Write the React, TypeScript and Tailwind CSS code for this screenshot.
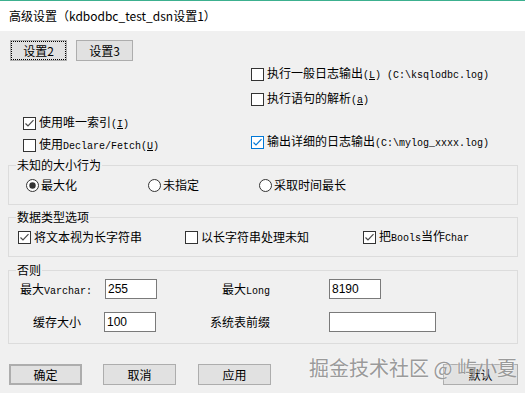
import React from "react";

const CJK = { fontFamily: '"Noto Sans CJK SC", "Noto Sans", sans-serif' };

function Mono({ children }: { children: React.ReactNode }) {
  return (
    <span className="text-[10px]" style={{ fontFamily: '"Liberation Mono", monospace' }}>
      {children}
    </span>
  );
}

function Check({ checked, blue }: { checked?: boolean; blue?: boolean }) {
  const c = blue ? "#0078d7" : "#333333";
  return (
    <svg width="13" height="13" viewBox="0 0 13 13" className="shrink-0">
      <rect x="0.5" y="0.5" width="12" height="12" fill="#fff" stroke={c} />
      {checked && (
        <polyline
          points="2.5,6.5 5,9 10.5,3.2"
          fill="none"
          stroke={blue ? "#0078d7" : "#4a4a4a"}
          strokeWidth="1.2"
        />
      )}
    </svg>
  );
}

function Radio({ checked }: { checked?: boolean }) {
  return (
    <svg width="13" height="13" viewBox="0 0 13 13" className="shrink-0">
      <circle cx="6.5" cy="6.5" r="6" fill="#fff" stroke="#333" />
      {checked && <circle cx="6.5" cy="6.5" r="3.2" fill="#333" />}
    </svg>
  );
}

function CB({
  checked,
  blue,
  children,
  className = "",
}: {
  checked?: boolean;
  blue?: boolean;
  children: React.ReactNode;
  className?: string;
}) {
  return (
    <div className={`flex h-[16px] items-center gap-[3px] whitespace-nowrap ${className}`}>
      <Check checked={checked} blue={blue} />
      <span className="leading-[16px]">{children}</span>
    </div>
  );
}

function Btn({
  children,
  className = "",
}: {
  children: React.ReactNode;
  className?: string;
}) {
  return (
    <div
      className={`flex h-[21px] items-center justify-center border border-[#adadad] bg-[#e1e1e1] text-[12px] leading-none ${className}`}
    >
      {children}
    </div>
  );
}

function Input({ value, w }: { value?: string; w: string }) {
  return (
    <div
      className={`flex h-[20px] items-center border border-[#7a7a7a] bg-white pl-[2px] text-[12px] ${w}`}
      style={{ fontFamily: '"Liberation Sans", "Noto Sans", sans-serif' }}
    >
      {value}
    </div>
  );
}

export default function App() {
  return (
    <div
      className="relative flex h-[393px] w-[525px] flex-col overflow-hidden bg-[#f0f0f0] text-[12px] text-black"
      style={CJK}
    >
      {/* title bar */}
      <div className="flex h-[31px] items-center border-t border-[#3cb08f] bg-white pl-[9px] text-[12px]">
        高级设置（kdbodbc_test_dsn设置1）
      </div>

      {/* tabs */}
      <div className="mt-[9px] flex h-[21px] gap-[9px] pl-[10px]">
        <Btn className="w-[57px] outline-1 outline-dotted outline-black -outline-offset-2">
          设置2
        </Btn>
        <Btn className="w-[57px]">设置3</Btn>
      </div>

      {/* options */}
      <div className="flex h-[96px]">
        <div className="ml-[23px] flex w-[228px] flex-col gap-[6px] pt-[54px]">
          <CB checked>
            使用唯一索引
            <Mono>
              (<u>I</u>)
            </Mono>
          </CB>
          <CB>
            使用<Mono>Declare/Fetch(</Mono>
            <Mono>
              <u>U</u>)
            </Mono>
          </CB>
        </div>
        <div className="flex flex-col pt-[5px]">
          <CB className="gap-[2px]">
            执行一般日志输出
            <Mono>
              (<u>L</u>) (C:\ksqlodbc.log)
            </Mono>
          </CB>
          <CB className="mt-[9px] gap-[2px]">
            执行语句的解析
            <Mono>
              (<u>a</u>)
            </Mono>
          </CB>
          <CB checked blue className="mt-[27px] gap-[2px]">
            输出详细的日志输出<Mono>(C:\mylog_xxxx.log)</Mono>
          </CB>
        </div>
      </div>

      {/* group 1 */}
      <fieldset className="ml-[8px] w-[510px] border border-[#dcdcdc] pb-[11px] pl-[7px] pt-[4px]">
        <legend className="px-[1px] leading-[16px]">未知的大小行为</legend>
        <div className="ml-[10px] flex h-[16px] items-center">
          <div className="flex w-[122px] items-center gap-[2px]">
            <Radio checked />
            <span>最大化</span>
          </div>
          <div className="flex w-[111px] items-center gap-[2px]">
            <Radio />
            <span>未指定</span>
          </div>
          <div className="flex items-center gap-[2px]">
            <Radio />
            <span>采取时间最长</span>
          </div>
        </div>
      </fieldset>

      {/* group 2 */}
      <fieldset className="ml-[8px] mt-[4px] w-[510px] border border-[#dcdcdc] pb-[11px] pl-[7px] pt-[4px]">
        <legend className="px-[1px] leading-[16px]">数据类型选项</legend>
        <div className="ml-[2px] flex h-[16px] items-center">
          <CB checked className="w-[167px]">
            将文本视为长字符串
          </CB>
          <CB className="w-[178px]">以长字符串处理未知</CB>
          <CB checked>
            把<Mono>Bools</Mono>当作<Mono>Char</Mono>
          </CB>
        </div>
      </fieldset>

      {/* group 3 */}
      <fieldset className="ml-[8px] mt-[5px] w-[510px] border border-[#dcdcdc] pb-[11px] pl-[7px] pt-[1px]">
        <legend className="px-[1px] leading-[16px]">否则</legend>
        <div className="flex h-[20px] items-center">
          <span className="w-[89px] pl-[4px]">
            最大<Mono>Varchar:</Mono>
          </span>
          <Input value="255" w="w-[52px]" />
          <span className="w-[172px] pl-[65px]">
            最大<Mono>Long</Mono>
          </span>
          <Input value="8190" w="w-[52px]" />
        </div>
        <div className="mt-[13px] flex h-[20px] items-center">
          <span className="w-[88px] pl-[17px]">缓存大小</span>
          <Input value="100" w="w-[52px]" />
          <span className="w-[173px] pl-[54px]">系统表前缀</span>
          <Input w="w-[107px]" />
        </div>
      </fieldset>

      {/* bottom buttons */}
      <div className="mt-[20px] flex pl-[9px] pr-[7px]">
        <Btn className="w-[73px] border-2 border-[#0078d7]">确定</Btn>
        <Btn className="ml-[21px] w-[73px]">取消</Btn>
        <Btn className="ml-[22px] w-[73px]">应用</Btn>
        <Btn className="ml-auto w-[75px]">默认</Btn>
      </div>

      {/* watermark */}
      <div
        className="pointer-events-none absolute left-[309px] top-[356px] whitespace-nowrap text-[20px] leading-[24px] text-[#9a9a9a] [text-shadow:0_0_2px_#ffffff]"
      >
        掘金技术社区 @ 屿小夏
      </div>
    </div>
  );
}
